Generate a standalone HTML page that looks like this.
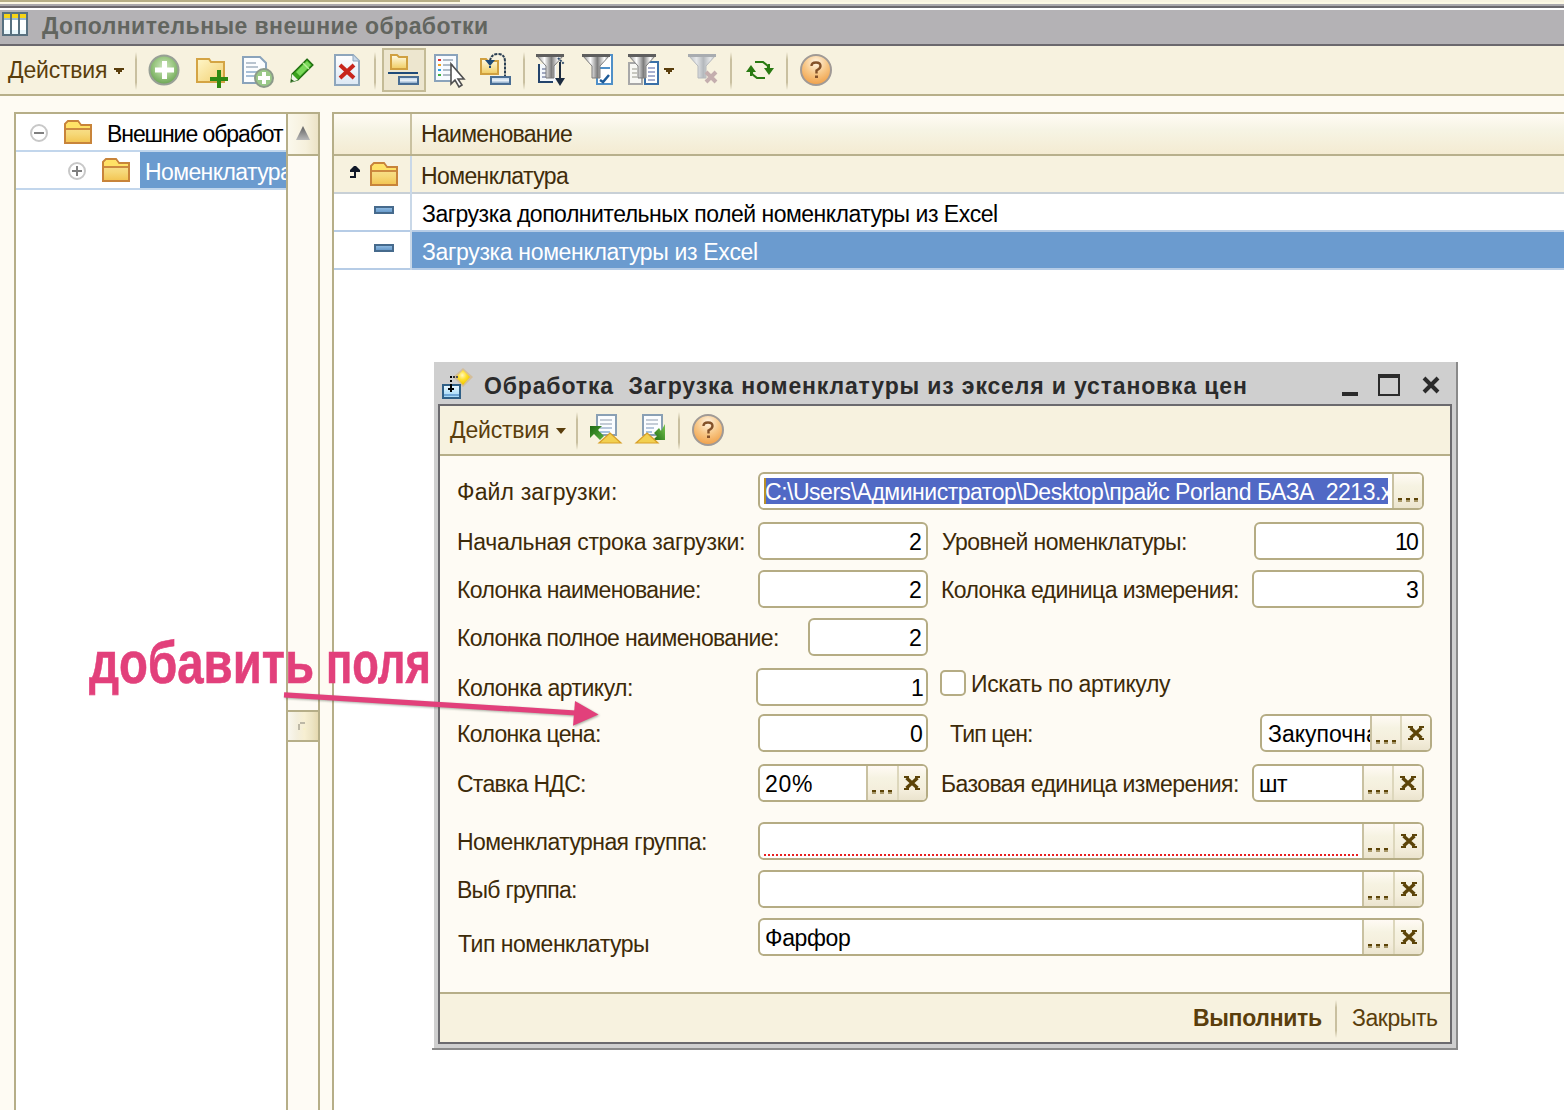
<!DOCTYPE html>
<html><head><meta charset="utf-8"><style>
html,body{margin:0;padding:0}
body{width:1564px;height:1110px;overflow:hidden;position:relative;background:#fefbf3;font-family:"Liberation Sans",sans-serif}
body div, body svg{position:absolute;box-sizing:border-box}
</style></head><body>
<div style="left:0px;top:0px;width:460px;height:2px;background:#b6ae86;"></div>
<div style="left:460px;top:0px;width:1104px;height:2px;background:#f7f2df;"></div>
<div style="left:0px;top:2px;width:1564px;height:2px;background:#fcf8e4;"></div>
<div style="left:0px;top:4px;width:1564px;height:2px;background:#a9a7ab;"></div>
<div style="left:0px;top:6px;width:1564px;height:2px;background:#6b686d;"></div>
<div style="left:0px;top:8px;width:1564px;height:2px;background:#ffffff;"></div>
<div style="left:0px;top:10px;width:1564px;height:34px;background:#b4b2b5;"></div>
<div style="left:0px;top:44px;width:1564px;height:2px;background:#6b686d;"></div>
<div style="left:0px;top:46px;width:1564px;height:48px;background:#f7f2df;"></div>
<div style="left:0px;top:94px;width:1564px;height:2px;background:#b7af89;"></div>
<svg style="left:2px;top:12px" width="26" height="24" viewBox="0 0 26 24">
<rect x="0" y="0" width="26" height="24" fill="#58707f"/>
<rect x="2" y="2" width="6" height="4" fill="#f6d417"/><rect x="10" y="2" width="6" height="4" fill="#f6d417"/><rect x="18" y="2" width="6" height="4" fill="#f6d417"/>
<rect x="2" y="6" width="6" height="2" fill="#9ab8d0"/><rect x="10" y="6" width="6" height="2" fill="#9ab8d0"/><rect x="18" y="6" width="6" height="2" fill="#9ab8d0"/>
<rect x="2" y="8" width="6" height="14" fill="#ffffff"/><rect x="10" y="8" width="6" height="14" fill="#ffffff"/><rect x="18" y="8" width="6" height="14" fill="#ffffff"/>
<rect x="2" y="18" width="6" height="4" fill="#e8f6fb"/><rect x="10" y="18" width="6" height="4" fill="#e8f6fb"/><rect x="18" y="18" width="6" height="4" fill="#e8f6fb"/>
</svg>
<svg style="left:114px;top:68px" width="10" height="6" viewBox="0 0 10 6"><rect x="0" y="0" width="10" height="2" fill="#5a3e0c"/><rect x="2" y="2" width="6" height="2" fill="#5a3e0c"/><rect x="4" y="4" width="2" height="2" fill="#5a3e0c"/></svg>
<div style="left:135px;top:52px;width:2px;height:38px;background:linear-gradient(#f7f2df,#c9c0a0 20%,#c9c0a0 80%,#f7f2df)"></div>
<div style="left:374px;top:52px;width:2px;height:38px;background:linear-gradient(#f7f2df,#c9c0a0 20%,#c9c0a0 80%,#f7f2df)"></div>
<div style="left:523px;top:52px;width:2px;height:38px;background:linear-gradient(#f7f2df,#c9c0a0 20%,#c9c0a0 80%,#f7f2df)"></div>
<div style="left:730px;top:52px;width:2px;height:38px;background:linear-gradient(#f7f2df,#c9c0a0 20%,#c9c0a0 80%,#f7f2df)"></div>
<div style="left:786px;top:52px;width:2px;height:38px;background:linear-gradient(#f7f2df,#c9c0a0 20%,#c9c0a0 80%,#f7f2df)"></div>
<svg style="left:148px;top:54px" width="32" height="32" viewBox="0 0 32 32">
<defs><radialGradient id="g1" cx="50%" cy="40%" r="60%"><stop offset="0" stop-color="#d2e8c2"/><stop offset=".55" stop-color="#9cc884"/><stop offset="1" stop-color="#6aa452"/></radialGradient></defs>
<circle cx="16" cy="16" r="14.5" fill="url(#g1)" stroke="#98a096" stroke-width="2"/>
<rect x="14" y="7" width="5" height="18" fill="#fff"/><rect x="7" y="13.5" width="19" height="5" fill="#fff"/>
</svg>
<svg style="left:196px;top:58px" width="32" height="30" viewBox="0 0 32 30">
<defs><linearGradient id="g2" x1="0" y1="0" x2="1" y2="1"><stop offset="0" stop-color="#fff6c8"/><stop offset="1" stop-color="#f2d072"/></linearGradient></defs>
<path d="M1 1 H13 L15 4 H28 V24 H1 Z" fill="url(#g2)" stroke="#d4a444" stroke-width="2"/>
<rect x="21" y="12" width="4" height="18" fill="#2e8a12"/><rect x="14" y="19" width="18" height="4" fill="#2e8a12"/>
</svg>
<svg style="left:242px;top:56px" width="32" height="32" viewBox="0 0 32 32">
<path d="M1 1 H18 L24 7 V27 H1 Z" fill="#fbfdff" stroke="#8aa3bb" stroke-width="2"/>
<rect x="4" y="6" width="10" height="2" fill="#b8c4d0"/><rect x="4" y="10" width="12" height="2" fill="#b8c4d0"/><rect x="4" y="15" width="12" height="2" fill="#a8c0d8"/><rect x="4" y="19" width="12" height="2" fill="#a8c0d8"/>
<circle cx="22" cy="22" r="9" fill="#9ac888" stroke="#8c9a8a" stroke-width="2"/>
<rect x="20" y="16" width="4" height="12" fill="#fff"/><rect x="16" y="20" width="12" height="4" fill="#fff"/>
</svg>
<svg style="left:288px;top:56px" width="28" height="28" viewBox="0 0 28 28">
<path d="M19 3 L25 9 L10 24 L3 26 L4 18 Z" fill="#3aa21e" stroke="#1e6a10" stroke-width="1.2"/>
<path d="M19 5 L23 9 L12 20 L8 16 Z" fill="#7ad85a"/>
<path d="M15 7 L21 13" stroke="#b8f098" stroke-width="1.5"/>
<path d="M4 18 L10 24 L3 26 Z" fill="#f0f4e8"/><path d="M3 23 L3 26 L6 25 Z" fill="#1e5a10"/>
</svg>
<svg style="left:334px;top:54px" width="28" height="34" viewBox="0 0 28 34">
<defs><linearGradient id="g5" x1="0" y1="0" x2="0" y2="1"><stop offset="0" stop-color="#ffffff"/><stop offset="1" stop-color="#dce8f4"/></linearGradient></defs>
<path d="M1 1 H19 L25 7 V31 H1 Z" fill="url(#g5)" stroke="#8ea6bc" stroke-width="2"/>
<path d="M19 1 V7 H25" fill="#c8d8e8" stroke="#8ea6bc" stroke-width="1"/>
<path d="M6 11 L20 24 M20 11 L6 24" stroke="#c8261c" stroke-width="4"/>
</svg>
<div style="left:382px;top:48px;width:44px;height:44px;background:#ede6cf;border:2px solid #c4bb96"></div>
<svg style="left:388px;top:54px" width="32" height="32" viewBox="0 0 32 32">
<defs><linearGradient id="g6" x1="0" y1="0" x2="0" y2="1"><stop offset="0" stop-color="#fffce8"/><stop offset="1" stop-color="#f0cc60"/></linearGradient>
<linearGradient id="g6b" x1="0" y1="0" x2="0" y2="1"><stop offset="0" stop-color="#b8d0e8"/><stop offset=".5" stop-color="#e8f0f8"/><stop offset="1" stop-color="#6a90b8"/></linearGradient></defs>
<path d="M3 1 H9 L11 3 H19 V15 H3 Z" fill="url(#g6)" stroke="#d0a040" stroke-width="2"/>
<rect x="0" y="18" width="30" height="2" fill="#1e4a78"/>
<rect x="11" y="23" width="19" height="7" fill="url(#g6b)" stroke="#4a6e94" stroke-width="2"/>
</svg>
<svg style="left:434px;top:54px" width="34" height="34" viewBox="0 0 34 34">
<rect x="1" y="1" width="22" height="26" fill="#f8fbff" stroke="#8aa3bb" stroke-width="2"/>
<rect x="4" y="5" width="3" height="2" fill="#e03030"/><rect x="9" y="5" width="10" height="2" fill="#b0bcc8"/>
<rect x="4" y="10" width="3" height="2" fill="#f0a020"/><rect x="9" y="10" width="10" height="2" fill="#b0bcc8"/>
<rect x="4" y="15" width="3" height="2" fill="#30a0e0"/><rect x="9" y="15" width="8" height="2" fill="#b0bcc8"/>
<rect x="4" y="20" width="3" height="2" fill="#40b040"/><rect x="9" y="20" width="8" height="2" fill="#b0bcc8"/>
<path d="M17 10 L17 30 L21 26 L25 33 L28 31 L24 25 L30 25 Z" fill="#fff" stroke="#505050" stroke-width="1.6"/>
</svg>
<svg style="left:478px;top:52px" width="34" height="36" viewBox="0 0 34 36">
<defs><linearGradient id="g8" x1="0" y1="0" x2="0" y2="1"><stop offset="0" stop-color="#fffce8"/><stop offset="1" stop-color="#f0cc60"/></linearGradient>
<linearGradient id="g8b" x1="0" y1="0" x2="0" y2="1"><stop offset="0" stop-color="#b8d0e8"/><stop offset=".5" stop-color="#e8f0f8"/><stop offset="1" stop-color="#6a90b8"/></linearGradient></defs>
<path d="M3 7 H8 L10 9 H20 V22 H3 Z" fill="url(#g8)" stroke="#d0a040" stroke-width="2"/>
<path d="M12 9 Q13 2 20 2 Q27 2 27 10 V26" fill="none" stroke="#2a3e52" stroke-width="2" stroke-dasharray="3 1"/>
<polygon points="7,8 17,8 12,14" fill="#1e4a78"/><rect x="11" y="14" width="2" height="2" fill="#1e4a78"/>
<rect x="13" y="25" width="19" height="7" fill="url(#g8b)" stroke="#4a6e94" stroke-width="2"/>
</svg>
<svg style="left:536px;top:54px" width="34" height="34" viewBox="0 0 34 34">
<defs><linearGradient id="gf536" x1="0" y1="0" x2="1" y2="0"><stop offset="0" stop-color="#7c7c7c"/><stop offset=".3" stop-color="#ffffff"/><stop offset=".55" stop-color="#7c7c7c"/><stop offset=".8" stop-color="#ffffff"/><stop offset="1" stop-color="#7c7c7c"/></linearGradient></defs>
<rect x="3" y="10" width="17" height="18" fill="#f4f8fc"/><path d="M3 10 V28 H17" stroke="#24446c" stroke-width="2" fill="none"/><rect x="6" y="14" width="4" height="2" fill="#a0a8c0"/><rect x="6" y="18" width="4" height="2" fill="#a0a8c0"/><rect x="6" y="22" width="4" height="2" fill="#a0a8c0"/>
<path d="M0 1 H28 L18 12 V24 H10 V12 Z" fill="url(#gf536)" stroke="#7c7c7c" stroke-width="1"/>
<rect x="0" y="0" width="28" height="3" fill="#5e5e5e"/>
<path d="M24 8 V28" stroke="#1c2c40" stroke-width="2"/><polygon points="19,24 29,24 24,32" fill="#1c2c40"/><path d="M22 4 L28 10" stroke="#2c4a6a" stroke-width="2" stroke-dasharray="2 1"/></svg>
<svg style="left:582px;top:54px" width="34" height="34" viewBox="0 0 34 34">
<defs><linearGradient id="gf582" x1="0" y1="0" x2="1" y2="0"><stop offset="0" stop-color="#7c7c7c"/><stop offset=".3" stop-color="#ffffff"/><stop offset=".55" stop-color="#7c7c7c"/><stop offset=".8" stop-color="#ffffff"/><stop offset="1" stop-color="#7c7c7c"/></linearGradient></defs>
<rect x="15" y="1" width="15" height="29" fill="#fff" stroke="#5090c8" stroke-width="2"/><rect x="17" y="13" width="11" height="2" fill="#5090c8"/>
<path d="M0 1 H28 L18 12 V24 H10 V12 Z" fill="url(#gf582)" stroke="#7c7c7c" stroke-width="1"/>
<rect x="0" y="0" width="28" height="3" fill="#5e5e5e"/>
<path d="M18 26 L21 28 L27 21" stroke="#1c5a98" stroke-width="2.5" fill="none"/></svg>
<svg style="left:628px;top:54px" width="34" height="34" viewBox="0 0 34 34">
<defs><linearGradient id="gf628" x1="0" y1="0" x2="1" y2="0"><stop offset="0" stop-color="#7c7c7c"/><stop offset=".3" stop-color="#ffffff"/><stop offset=".55" stop-color="#7c7c7c"/><stop offset=".8" stop-color="#ffffff"/><stop offset="1" stop-color="#7c7c7c"/></linearGradient></defs>
<rect x="1" y="9" width="13" height="21" fill="#f8f8f4" stroke="#a8a8a8" stroke-width="2"/><rect x="4" y="14" width="5" height="2" fill="#c8c8c0"/><rect x="4" y="18" width="5" height="2" fill="#c8c8c0"/><rect x="4" y="22" width="5" height="2" fill="#c8c8c0"/><rect x="17" y="8" width="13" height="22" fill="#fff" stroke="#3a70a8" stroke-width="2"/><rect x="20" y="13" width="7" height="2" fill="#a8b0d0"/><rect x="20" y="17" width="7" height="2" fill="#a8b0d0"/><rect x="20" y="21" width="7" height="2" fill="#a8b0d0"/><rect x="20" y="25" width="7" height="2" fill="#a8b0d0"/>
<path d="M0 1 H28 L18 12 V24 H10 V12 Z" fill="url(#gf628)" stroke="#7c7c7c" stroke-width="1"/>
<rect x="0" y="0" width="28" height="3" fill="#5e5e5e"/>
</svg>
<svg style="left:664px;top:68px" width="10" height="6" viewBox="0 0 10 6"><rect x="0" y="0" width="10" height="2" fill="#5a3e0c"/><rect x="2" y="2" width="6" height="2" fill="#5a3e0c"/><rect x="4" y="4" width="2" height="2" fill="#5a3e0c"/></svg>
<svg style="left:688px;top:54px" width="34" height="34" viewBox="0 0 34 34">
<defs><linearGradient id="gf688" x1="0" y1="0" x2="1" y2="0"><stop offset="0" stop-color="#b4b8bc"/><stop offset=".3" stop-color="#e6e8ea"/><stop offset=".55" stop-color="#b4b8bc"/><stop offset=".8" stop-color="#e6e8ea"/><stop offset="1" stop-color="#b4b8bc"/></linearGradient></defs>

<path d="M0 1 H28 L18 12 V24 H10 V12 Z" fill="url(#gf688)" stroke="#b4b8bc" stroke-width="1"/>
<rect x="0" y="0" width="28" height="3" fill="#a8acb0"/>
<path d="M18 18 L28 28 M28 18 L18 28" stroke="#c4aeae" stroke-width="4"/></svg>
<svg style="left:746px;top:58px" width="28" height="24" viewBox="0 0 28 24">
<path d="M9 4 H17 L22 8 V10" fill="none" stroke="#2a7a12" stroke-width="2.2"/>
<path d="M19 20 H11 L6 16 V14" fill="none" stroke="#2a7a12" stroke-width="2.2"/>
<polygon points="0,14 10,14 5,7" fill="#2a7a12"/><rect x="4" y="10" width="2" height="8" fill="#2a7a12"/>
<polygon points="18,10 28,10 23,17" fill="#2a7a12"/><rect x="22" y="6" width="2" height="8" fill="#2a7a12"/>
</svg>
<svg style="left:800px;top:54px" width="32" height="32" viewBox="0 0 32 32">
<defs><radialGradient id="gh800" cx="50%" cy="25%" r="75%"><stop offset="0" stop-color="#fff4e4"/><stop offset=".5" stop-color="#f8c888"/><stop offset="1" stop-color="#f0a048"/></radialGradient></defs>
<circle cx="16" cy="16" r="15" fill="url(#gh800)" stroke="#a09a96" stroke-width="2"/>
<path d="M11.5 12 Q11.5 8.5 16 8.5 Q20.5 8.5 20.5 12 Q20.5 14.5 16.5 16.5 V19.5" fill="none" stroke="#84522a" stroke-width="2.4"/>
<rect x="15" y="21.5" width="3" height="2.5" fill="#84522a"/>
</svg>
<div style="left:14px;top:112px;width:306px;height:1000px;background:#ffffff;border:2px solid #b6ae88"></div>
<div style="left:286px;top:114px;width:2px;height:996px;background:#b6ae88;"></div>
<div style="left:288px;top:114px;width:30px;height:996px;background:#fefbf5;"></div>
<div style="left:288px;top:114px;width:30px;height:40px;background:linear-gradient(90deg,#fbf8ec,#f6f0dc 60%,#ece3c6);"></div>
<div style="left:288px;top:154px;width:30px;height:2px;background:#b6ae88;"></div>
<svg style="left:296px;top:126px" width="14" height="14"><defs><linearGradient id="gt" x1="0" y1="0" x2="0" y2="1"><stop offset="0" stop-color="#606060"/><stop offset="1" stop-color="#b8b8b8"/></linearGradient></defs><polygon points="7,0 14,14 0,14" fill="url(#gt)"/></svg>
<div style="left:288px;top:710px;width:30px;height:2px;background:#b6ae88;"></div>
<div style="left:288px;top:712px;width:30px;height:28px;background:linear-gradient(90deg,#f9f7ef,#f3eedc 30%,#f7efd2 55%,#ede4c4 80%,#e6d9b0);"></div>
<div style="left:288px;top:740px;width:30px;height:2px;background:#b6ae88;"></div>
<svg style="left:298px;top:722px" width="10" height="10" viewBox="0 0 10 10"><path d="M2 1 H7 M1 2 V8" stroke="#bdb8a6" stroke-width="2"/><rect x="5" y="6" width="3" height="2" fill="#f6f0c8"/></svg>
<div style="left:16px;top:150px;width:270px;height:2px;background:#c2d6ec;"></div>
<div style="left:16px;top:188px;width:270px;height:2px;background:#c2d6ec;"></div>
<div style="left:140px;top:152px;width:146px;height:36px;background:#6b9bcf;"></div>
<svg style="left:30px;top:124px" width="18" height="18" viewBox="0 0 18 18"><circle cx="9" cy="9" r="8" fill="#fff" stroke="#c8c8c8" stroke-width="2"/><rect x="4" y="8" width="10" height="2" fill="#808080"/></svg>
<svg style="left:68px;top:162px" width="18" height="18" viewBox="0 0 18 18"><circle cx="9" cy="9" r="8" fill="#fff" stroke="#c8c8c8" stroke-width="2"/><rect x="4" y="8" width="10" height="2" fill="#808080"/><rect x="8" y="4" width="2" height="10" fill="#808080"/></svg>
<svg style="left:64px;top:120px" width="28" height="24" viewBox="0 0 28 24">
<defs><linearGradient id="gfo64120" x1="0" y1="0" x2="0" y2="1"><stop offset="0" stop-color="#fbe8a0"/><stop offset=".6" stop-color="#f6d878"/><stop offset="1" stop-color="#f2c450"/></linearGradient></defs>
<path d="M1 23 V4 L4 1 H14 L17 5 H27 V23 Z" fill="url(#gfo64120)" stroke="#c8843a" stroke-width="2"/>
<path d="M2 8 V4.5 L4.5 2 H13.5 L16.5 6 H26 V8 Z" fill="#ffe266"/>
<rect x="2" y="8" width="24" height="2" fill="#cc8a40"/>
</svg>
<svg style="left:102px;top:158px" width="28" height="24" viewBox="0 0 28 24">
<defs><linearGradient id="gfo102158" x1="0" y1="0" x2="0" y2="1"><stop offset="0" stop-color="#fbe8a0"/><stop offset=".6" stop-color="#f6d878"/><stop offset="1" stop-color="#f2c450"/></linearGradient></defs>
<path d="M1 23 V4 L4 1 H14 L17 5 H27 V23 Z" fill="url(#gfo102158)" stroke="#c8843a" stroke-width="2"/>
<path d="M2 8 V4.5 L4.5 2 H13.5 L16.5 6 H26 V8 Z" fill="#ffe266"/>
<rect x="2" y="8" width="24" height="2" fill="#cc8a40"/>
</svg>
<div style="left:332px;top:112px;width:1232px;height:2px;background:#b6ae88;"></div>
<div style="left:332px;top:112px;width:2px;height:998px;background:#b6ae88;"></div>
<div style="left:334px;top:114px;width:1230px;height:996px;background:#ffffff;"></div>
<div style="left:334px;top:114px;width:1230px;height:40px;background:linear-gradient(#fffcf4,#f6f4e4 40%,#f4ebd2);"></div>
<div style="left:410px;top:114px;width:2px;height:40px;background:#c9c1a0;"></div>
<div style="left:334px;top:154px;width:1230px;height:2px;background:#b8b08c;"></div>
<div style="left:334px;top:156px;width:1230px;height:36px;background:#f7f2df;"></div>
<div style="left:334px;top:192px;width:1230px;height:2px;background:#c8d0d6;"></div>
<div style="left:334px;top:230px;width:1230px;height:2px;background:#b6cce6;"></div>
<div style="left:412px;top:232px;width:1152px;height:36px;background:#6b9bcf;"></div>
<div style="left:334px;top:268px;width:1230px;height:2px;background:#b6cce6;"></div>
<div style="left:410px;top:156px;width:2px;height:114px;background:#c9d8e8;"></div>
<svg style="left:350px;top:166px" width="10" height="12" viewBox="0 0 10 12"><polygon points="4,0 0,4 10,4 6,0" fill="#101828"/><rect x="4" y="2" width="2" height="8" fill="#101828"/><rect x="0" y="10" width="6" height="2" fill="#101828"/><rect x="0" y="4" width="10" height="2" fill="#101828"/></svg>
<svg style="left:370px;top:162px" width="28" height="24" viewBox="0 0 28 24">
<defs><linearGradient id="gfo370162" x1="0" y1="0" x2="0" y2="1"><stop offset="0" stop-color="#fbe8a0"/><stop offset=".6" stop-color="#f6d878"/><stop offset="1" stop-color="#f2c450"/></linearGradient></defs>
<path d="M1 23 V4 L4 1 H14 L17 5 H27 V23 Z" fill="url(#gfo370162)" stroke="#c8843a" stroke-width="2"/>
<path d="M2 8 V4.5 L4.5 2 H13.5 L16.5 6 H26 V8 Z" fill="#ffe266"/>
<rect x="2" y="8" width="24" height="2" fill="#cc8a40"/>
</svg>
<div style="left:374px;top:206px;width:20px;height:8px;background:linear-gradient(#8cb8e0,#6a9ccc);border:2px solid #466a8c"></div>
<div style="left:374px;top:244px;width:20px;height:8px;background:linear-gradient(#8cb8e0,#6a9ccc);border:2px solid #466a8c"></div>
<div style="left:434px;top:362px;width:1022px;height:686px;background:#cfcfcf;"></div>
<div style="left:1456px;top:362px;width:2px;height:688px;background:#8a8a8a;"></div>
<div style="left:432px;top:1048px;width:1026px;height:2px;background:#8a8a8a;"></div>
<div style="left:438px;top:404px;width:1014px;height:640px;background:#fefbf4;border:2px solid #6b6a6e"></div>
<div style="left:440px;top:406px;width:1010px;height:48px;background:#f7f2df;"></div>
<div style="left:440px;top:454px;width:1010px;height:2px;background:#b6ae88;"></div>
<div style="left:440px;top:992px;width:1010px;height:2px;background:#b6ae88;"></div>
<div style="left:440px;top:994px;width:1010px;height:48px;background:#f7f2df;"></div>
<svg style="left:438px;top:364px" width="40" height="40" viewBox="0 0 40 40">
<defs><linearGradient id="gti" x1="0" y1="0" x2="0" y2="1"><stop offset="0" stop-color="#f0faff"/><stop offset=".5" stop-color="#c0e6fb"/><stop offset="1" stop-color="#9ed6f6"/></linearGradient>
<radialGradient id="gst" cx="45%" cy="35%" r="60%"><stop offset="0" stop-color="#fff8c0"/><stop offset=".5" stop-color="#ffe030"/><stop offset="1" stop-color="#f0c800"/></radialGradient></defs>
<polygon points="25,4 35,13 25,23 15,13" fill="#d8b070" opacity=".55"/>
<polygon points="25,6 32,13 25,21 18,13" fill="url(#gst)"/>
<rect x="5" y="21" width="17" height="13" fill="url(#gti)" stroke="#2f5f86" stroke-width="2"/>
<rect x="6" y="30" width="15" height="2" fill="#70a8d8"/>
<rect x="12" y="12" width="2" height="2" fill="#000"/><rect x="12" y="16" width="2" height="2" fill="#000"/><rect x="12" y="20" width="2" height="2" fill="#000"/><rect x="15" y="12" width="2" height="2" fill="#333"/><rect x="18" y="12" width="2" height="2" fill="#555"/>
<rect x="12" y="22" width="2" height="6" fill="#000"/><rect x="10" y="24" width="6" height="2" fill="#000"/>
</svg>
<div style="left:1342px;top:392px;width:16px;height:4px;background:#2b2b2b;"></div>
<div style="left:1378px;top:374px;width:22px;height:22px;border:2px solid #2b2b2b;border-top-width:4px"></div>
<svg style="left:1422px;top:376px" width="18" height="18" viewBox="0 0 18 18"><path d="M2 2 L16 16 M16 2 L2 16" stroke="#2b2b2b" stroke-width="4"/></svg>
<svg style="left:556px;top:428px" width="10" height="6"><polygon points="0,0 10,0 5,6" fill="#5a3e0c"/></svg>
<div style="left:576px;top:412px;width:2px;height:38px;background:linear-gradient(#f7f2df,#c9c0a0 20%,#c9c0a0 80%,#f7f2df)"></div>
<div style="left:678px;top:412px;width:2px;height:38px;background:linear-gradient(#f7f2df,#c9c0a0 20%,#c9c0a0 80%,#f7f2df)"></div>
<svg style="left:588px;top:412px" width="36" height="34" viewBox="0 0 36 34">
<defs><linearGradient id="gar1" x1="0" y1="0" x2="1" y2="1"><stop offset="0" stop-color="#1e6a12"/><stop offset="1" stop-color="#58b040"/></linearGradient></defs>
<rect x="9" y="3" width="19" height="20" fill="#fbfdff" stroke="#8aa0b4" stroke-width="2"/>
<rect x="12" y="7" width="12" height="2" fill="#c4ccd6"/><rect x="12" y="11" width="12" height="2" fill="#c4ccd6"/><rect x="12" y="15" width="12" height="2" fill="#b8c8dc"/><rect x="12" y="19" width="10" height="2" fill="#a8c4e0"/>
<polygon points="2,14 14,14 10,18 16,24 12,28 6,22 2,26" fill="url(#gar1)"/>
<polygon points="22,21 33,31 11,31" fill="#f2d050" stroke="#d8a028" stroke-width="1.2"/>
</svg>
<svg style="left:634px;top:412px" width="36" height="34" viewBox="0 0 36 34">
<defs><linearGradient id="gar2" x1="1" y1="0" x2="0" y2="1"><stop offset="0" stop-color="#78c850"/><stop offset="1" stop-color="#1e6a12"/></linearGradient></defs>
<rect x="9" y="3" width="19" height="20" fill="#fbfdff" stroke="#8aa0b4" stroke-width="2"/>
<rect x="12" y="7" width="12" height="2" fill="#c4ccd6"/><rect x="12" y="11" width="12" height="2" fill="#c4ccd6"/><rect x="12" y="15" width="8" height="2" fill="#b8c8dc"/><rect x="12" y="19" width="6" height="2" fill="#a8c4e0"/>
<polygon points="31,12 31,28 19,28 23,24 20,21 25,16 27,19" fill="url(#gar2)"/>
<polygon points="13,21 24,31 2,31" fill="#f2d050" stroke="#d8a028" stroke-width="1.2"/>
</svg>
<svg style="left:692px;top:414px" width="32" height="32" viewBox="0 0 32 32">
<defs><radialGradient id="gh692" cx="50%" cy="25%" r="75%"><stop offset="0" stop-color="#fff4e4"/><stop offset=".5" stop-color="#f8c888"/><stop offset="1" stop-color="#f0a048"/></radialGradient></defs>
<circle cx="16" cy="16" r="15" fill="url(#gh692)" stroke="#a09a96" stroke-width="2"/>
<path d="M11.5 12 Q11.5 8.5 16 8.5 Q20.5 8.5 20.5 12 Q20.5 14.5 16.5 16.5 V19.5" fill="none" stroke="#84522a" stroke-width="2.4"/>
<rect x="15" y="21.5" width="3" height="2.5" fill="#84522a"/>
</svg>
<div style="left:758px;top:472px;width:666px;height:38px;background:#fff;border:2px solid #b5ac84;border-radius:6px;overflow:hidden"><div style="left:632px;top:0;width:30px;height:34px;background:linear-gradient(#fffaf4,#f6f3e2 35%,#f4eedc 70%,#ebe4ce);border-left:2px solid #c9c1a1"></div></div>
<div style="left:764px;top:478px;width:624px;height:26px;background:#5169c5;"></div>
<div style="left:764px;top:478px;width:2px;height:26px;background:#b8902a;"></div>
<div style="left:1398px;top:498px;width:4px;height:2px;background:#5c4408;"></div>
<div style="left:1398px;top:500px;width:4px;height:2px;background:#a8986a;"></div>
<div style="left:1406px;top:498px;width:4px;height:2px;background:#5c4408;"></div>
<div style="left:1406px;top:500px;width:4px;height:2px;background:#a8986a;"></div>
<div style="left:1414px;top:498px;width:4px;height:2px;background:#5c4408;"></div>
<div style="left:1414px;top:500px;width:4px;height:2px;background:#a8986a;"></div>
<div style="left:758px;top:522px;width:170px;height:38px;background:#fff;border:2px solid #b5ac84;border-radius:6px;overflow:hidden"></div>
<div style="left:1254px;top:522px;width:170px;height:38px;background:#fff;border:2px solid #b5ac84;border-radius:6px;overflow:hidden"></div>
<div style="left:758px;top:570px;width:170px;height:38px;background:#fff;border:2px solid #b5ac84;border-radius:6px;overflow:hidden"></div>
<div style="left:1252px;top:570px;width:172px;height:38px;background:#fff;border:2px solid #b5ac84;border-radius:6px;overflow:hidden"></div>
<div style="left:808px;top:618px;width:120px;height:38px;background:#fff;border:2px solid #b5ac84;border-radius:6px;overflow:hidden"></div>
<div style="left:756px;top:668px;width:172px;height:38px;background:#fff;border:2px solid #b5ac84;border-radius:6px;overflow:hidden"></div>
<div style="left:940px;top:670px;width:26px;height:26px;background:#fff;border:2px solid #b5ac84;border-radius:5px"></div>
<div style="left:758px;top:714px;width:170px;height:38px;background:#fff;border:2px solid #b5ac84;border-radius:6px;overflow:hidden"></div>
<div style="left:1260px;top:714px;width:172px;height:38px;background:#fff;border:2px solid #b5ac84;border-radius:6px;overflow:hidden"><div style="left:108px;top:0;width:30px;height:34px;background:linear-gradient(#fffaf4,#f6f3e2 35%,#f4eedc 70%,#ebe4ce);border-left:2px solid #c9c1a1"></div><div style="left:138px;top:0;width:30px;height:34px;background:linear-gradient(#fffaf4,#f6f3e2 35%,#f4eedc 70%,#ebe4ce);border-left:2px solid #ddd7bc"></div></div>
<div style="left:1376px;top:740px;width:4px;height:2px;background:#5c4408;"></div>
<div style="left:1376px;top:742px;width:4px;height:2px;background:#a8986a;"></div>
<div style="left:1384px;top:740px;width:4px;height:2px;background:#5c4408;"></div>
<div style="left:1384px;top:742px;width:4px;height:2px;background:#a8986a;"></div>
<div style="left:1392px;top:740px;width:4px;height:2px;background:#5c4408;"></div>
<div style="left:1392px;top:742px;width:4px;height:2px;background:#a8986a;"></div>
<svg style="left:1408px;top:726px" width="16" height="14" viewBox="0 0 16 14"><path d="M2.5 2 L13.5 12 M13.5 2 L2.5 12" stroke="#5c4408" stroke-width="3.4"/><rect x="0" y="0" width="5" height="2" fill="#5c4408"/><rect x="11" y="0" width="5" height="2" fill="#5c4408"/><rect x="0" y="12" width="5" height="2" fill="#5c4408"/><rect x="11" y="12" width="5" height="2" fill="#5c4408"/></svg>
<div style="left:758px;top:764px;width:170px;height:38px;background:#fff;border:2px solid #b5ac84;border-radius:6px;overflow:hidden"><div style="left:106px;top:0;width:31px;height:34px;background:linear-gradient(#fffaf4,#f6f3e2 35%,#f4eedc 70%,#ebe4ce);border-left:2px solid #c9c1a1"></div><div style="left:137px;top:0;width:29px;height:34px;background:linear-gradient(#fffaf4,#f6f3e2 35%,#f4eedc 70%,#ebe4ce);border-left:2px solid #ddd7bc"></div></div>
<div style="left:872px;top:790px;width:4px;height:2px;background:#5c4408;"></div>
<div style="left:872px;top:792px;width:4px;height:2px;background:#a8986a;"></div>
<div style="left:880px;top:790px;width:4px;height:2px;background:#5c4408;"></div>
<div style="left:880px;top:792px;width:4px;height:2px;background:#a8986a;"></div>
<div style="left:888px;top:790px;width:4px;height:2px;background:#5c4408;"></div>
<div style="left:888px;top:792px;width:4px;height:2px;background:#a8986a;"></div>
<svg style="left:904px;top:776px" width="16" height="14" viewBox="0 0 16 14"><path d="M2.5 2 L13.5 12 M13.5 2 L2.5 12" stroke="#5c4408" stroke-width="3.4"/><rect x="0" y="0" width="5" height="2" fill="#5c4408"/><rect x="11" y="0" width="5" height="2" fill="#5c4408"/><rect x="0" y="12" width="5" height="2" fill="#5c4408"/><rect x="11" y="12" width="5" height="2" fill="#5c4408"/></svg>
<div style="left:1252px;top:764px;width:172px;height:38px;background:#fff;border:2px solid #b5ac84;border-radius:6px;overflow:hidden"><div style="left:108px;top:0;width:30px;height:34px;background:linear-gradient(#fffaf4,#f6f3e2 35%,#f4eedc 70%,#ebe4ce);border-left:2px solid #c9c1a1"></div><div style="left:138px;top:0;width:30px;height:34px;background:linear-gradient(#fffaf4,#f6f3e2 35%,#f4eedc 70%,#ebe4ce);border-left:2px solid #ddd7bc"></div></div>
<div style="left:1368px;top:790px;width:4px;height:2px;background:#5c4408;"></div>
<div style="left:1368px;top:792px;width:4px;height:2px;background:#a8986a;"></div>
<div style="left:1376px;top:790px;width:4px;height:2px;background:#5c4408;"></div>
<div style="left:1376px;top:792px;width:4px;height:2px;background:#a8986a;"></div>
<div style="left:1384px;top:790px;width:4px;height:2px;background:#5c4408;"></div>
<div style="left:1384px;top:792px;width:4px;height:2px;background:#a8986a;"></div>
<svg style="left:1400px;top:776px" width="16" height="14" viewBox="0 0 16 14"><path d="M2.5 2 L13.5 12 M13.5 2 L2.5 12" stroke="#5c4408" stroke-width="3.4"/><rect x="0" y="0" width="5" height="2" fill="#5c4408"/><rect x="11" y="0" width="5" height="2" fill="#5c4408"/><rect x="0" y="12" width="5" height="2" fill="#5c4408"/><rect x="11" y="12" width="5" height="2" fill="#5c4408"/></svg>
<div style="left:758px;top:822px;width:666px;height:38px;background:#fff;border:2px solid #b5ac84;border-radius:6px;overflow:hidden"><div style="left:602px;top:0;width:31px;height:34px;background:linear-gradient(#fffaf4,#f6f3e2 35%,#f4eedc 70%,#ebe4ce);border-left:2px solid #c9c1a1"></div><div style="left:633px;top:0;width:29px;height:34px;background:linear-gradient(#fffaf4,#f6f3e2 35%,#f4eedc 70%,#ebe4ce);border-left:2px solid #ddd7bc"></div></div>
<div style="left:1368px;top:848px;width:4px;height:2px;background:#5c4408;"></div>
<div style="left:1368px;top:850px;width:4px;height:2px;background:#a8986a;"></div>
<div style="left:1376px;top:848px;width:4px;height:2px;background:#5c4408;"></div>
<div style="left:1376px;top:850px;width:4px;height:2px;background:#a8986a;"></div>
<div style="left:1384px;top:848px;width:4px;height:2px;background:#5c4408;"></div>
<div style="left:1384px;top:850px;width:4px;height:2px;background:#a8986a;"></div>
<svg style="left:1401px;top:834px" width="16" height="14" viewBox="0 0 16 14"><path d="M2.5 2 L13.5 12 M13.5 2 L2.5 12" stroke="#5c4408" stroke-width="3.4"/><rect x="0" y="0" width="5" height="2" fill="#5c4408"/><rect x="11" y="0" width="5" height="2" fill="#5c4408"/><rect x="0" y="12" width="5" height="2" fill="#5c4408"/><rect x="11" y="12" width="5" height="2" fill="#5c4408"/></svg>
<div style="left:758px;top:870px;width:666px;height:38px;background:#fff;border:2px solid #b5ac84;border-radius:6px;overflow:hidden"><div style="left:602px;top:0;width:31px;height:34px;background:linear-gradient(#fffaf4,#f6f3e2 35%,#f4eedc 70%,#ebe4ce);border-left:2px solid #c9c1a1"></div><div style="left:633px;top:0;width:29px;height:34px;background:linear-gradient(#fffaf4,#f6f3e2 35%,#f4eedc 70%,#ebe4ce);border-left:2px solid #ddd7bc"></div></div>
<div style="left:1368px;top:896px;width:4px;height:2px;background:#5c4408;"></div>
<div style="left:1368px;top:898px;width:4px;height:2px;background:#a8986a;"></div>
<div style="left:1376px;top:896px;width:4px;height:2px;background:#5c4408;"></div>
<div style="left:1376px;top:898px;width:4px;height:2px;background:#a8986a;"></div>
<div style="left:1384px;top:896px;width:4px;height:2px;background:#5c4408;"></div>
<div style="left:1384px;top:898px;width:4px;height:2px;background:#a8986a;"></div>
<svg style="left:1401px;top:882px" width="16" height="14" viewBox="0 0 16 14"><path d="M2.5 2 L13.5 12 M13.5 2 L2.5 12" stroke="#5c4408" stroke-width="3.4"/><rect x="0" y="0" width="5" height="2" fill="#5c4408"/><rect x="11" y="0" width="5" height="2" fill="#5c4408"/><rect x="0" y="12" width="5" height="2" fill="#5c4408"/><rect x="11" y="12" width="5" height="2" fill="#5c4408"/></svg>
<div style="left:758px;top:918px;width:666px;height:38px;background:#fff;border:2px solid #b5ac84;border-radius:6px;overflow:hidden"><div style="left:602px;top:0;width:31px;height:34px;background:linear-gradient(#fffaf4,#f6f3e2 35%,#f4eedc 70%,#ebe4ce);border-left:2px solid #c9c1a1"></div><div style="left:633px;top:0;width:29px;height:34px;background:linear-gradient(#fffaf4,#f6f3e2 35%,#f4eedc 70%,#ebe4ce);border-left:2px solid #ddd7bc"></div></div>
<div style="left:1368px;top:944px;width:4px;height:2px;background:#5c4408;"></div>
<div style="left:1368px;top:946px;width:4px;height:2px;background:#a8986a;"></div>
<div style="left:1376px;top:944px;width:4px;height:2px;background:#5c4408;"></div>
<div style="left:1376px;top:946px;width:4px;height:2px;background:#a8986a;"></div>
<div style="left:1384px;top:944px;width:4px;height:2px;background:#5c4408;"></div>
<div style="left:1384px;top:946px;width:4px;height:2px;background:#a8986a;"></div>
<svg style="left:1401px;top:930px" width="16" height="14" viewBox="0 0 16 14"><path d="M2.5 2 L13.5 12 M13.5 2 L2.5 12" stroke="#5c4408" stroke-width="3.4"/><rect x="0" y="0" width="5" height="2" fill="#5c4408"/><rect x="11" y="0" width="5" height="2" fill="#5c4408"/><rect x="0" y="12" width="5" height="2" fill="#5c4408"/><rect x="11" y="12" width="5" height="2" fill="#5c4408"/></svg>
<div style="left:764px;top:854px;width:594px;height:2px;background:repeating-linear-gradient(90deg,#e82020 0 2px,transparent 2px 4px)"></div>
<div style="left:1335px;top:1000px;width:2px;height:38px;background:linear-gradient(#f7f2df,#c9c0a0 20%,#c9c0a0 80%,#f7f2df)"></div>
<div style="left:42.00px;top:15px;font-size:23px;line-height:23px;font-weight:700;color:#62655f;letter-spacing:0.419px;white-space:pre;font-family:'Liberation Sans';">Дополнительные внешние обработки</div>
<div style="left:8.00px;top:59px;font-size:23px;line-height:23px;font-weight:400;color:#5a3e0c;letter-spacing:-0.188px;white-space:pre;font-family:'Liberation Sans';">Действия</div>
<div style="left:100px;top:117px;width:186px;height:35px;overflow:hidden"><div style="left:107.00px;top:123px;font-size:23px;line-height:23px;font-weight:400;color:#000000;letter-spacing:-1.073px;white-space:pre;font-family:'Liberation Sans';;left:7.00px;top:6px">Внешние обработ</div></div>
<div style="left:140px;top:155px;width:146px;height:35px;overflow:hidden"><div style="left:145.00px;top:161px;font-size:23px;line-height:23px;font-weight:400;color:#ffffff;letter-spacing:-0.596px;white-space:pre;font-family:'Liberation Sans';;left:5.00px;top:6px">Номенклатура</div></div>
<div style="left:421.00px;top:123px;font-size:23px;line-height:23px;font-weight:400;color:#3f2c0a;letter-spacing:-0.695px;white-space:pre;font-family:'Liberation Sans';">Наименование</div>
<div style="left:421.00px;top:165px;font-size:23px;line-height:23px;font-weight:400;color:#3f2c0a;letter-spacing:-0.596px;white-space:pre;font-family:'Liberation Sans';">Номенклатура</div>
<div style="left:422.00px;top:203px;font-size:23px;line-height:23px;font-weight:400;color:#000000;letter-spacing:-0.497px;white-space:pre;font-family:'Liberation Sans';">Загрузка дополнительных полей номенклатуры из Excel</div>
<div style="left:422.00px;top:241px;font-size:23px;line-height:23px;font-weight:400;color:#ffffff;letter-spacing:-0.341px;white-space:pre;font-family:'Liberation Sans';">Загрузка номенклатуры из Excel</div>
<div style="left:484.00px;top:375px;font-size:23px;line-height:23px;font-weight:700;color:#2b2b2b;letter-spacing:0.856px;white-space:pre;font-family:'Liberation Sans';">Обработка  Загрузка номенклатуры из экселя и установка цен</div>
<div style="left:450.00px;top:419px;font-size:23px;line-height:23px;font-weight:400;color:#5a3e0c;letter-spacing:-0.188px;white-space:pre;font-family:'Liberation Sans';">Действия</div>
<div style="left:766px;top:475px;width:622px;height:35px;overflow:hidden"><div style="left:765.00px;top:481px;font-size:23px;line-height:23px;font-weight:400;color:#ffffff;letter-spacing:-0.477px;white-space:pre;font-family:'Liberation Sans';;left:-1.00px;top:6px">C:\Users\Администратор\Desktop\прайс Porland БАЗА  2213.xls</div></div>
<div style="left:457.00px;top:481px;font-size:23px;line-height:23px;font-weight:400;color:#3d2a08;letter-spacing:0.142px;white-space:pre;font-family:'Liberation Sans';">Файл загрузки:</div>
<div style="left:909.00px;top:531px;font-size:23px;line-height:23px;font-weight:400;color:#000;letter-spacing:0.000px;white-space:pre;font-family:'Liberation Sans';">2</div>
<div style="left:457.00px;top:531px;font-size:23px;line-height:23px;font-weight:400;color:#3d2a08;letter-spacing:-0.320px;white-space:pre;font-family:'Liberation Sans';">Начальная строка загрузки:</div>
<div style="left:942.00px;top:531px;font-size:23px;line-height:23px;font-weight:400;color:#3d2a08;letter-spacing:-0.565px;white-space:pre;font-family:'Liberation Sans';">Уровней номенклатуры:</div>
<div style="left:1395.00px;top:531px;font-size:23px;line-height:23px;font-weight:400;color:#000;letter-spacing:-1.792px;white-space:pre;font-family:'Liberation Sans';">10</div>
<div style="left:909.00px;top:579px;font-size:23px;line-height:23px;font-weight:400;color:#000;letter-spacing:0.000px;white-space:pre;font-family:'Liberation Sans';">2</div>
<div style="left:457.00px;top:579px;font-size:23px;line-height:23px;font-weight:400;color:#3d2a08;letter-spacing:-0.607px;white-space:pre;font-family:'Liberation Sans';">Колонка наименование:</div>
<div style="left:941.00px;top:579px;font-size:23px;line-height:23px;font-weight:400;color:#3d2a08;letter-spacing:-0.586px;white-space:pre;font-family:'Liberation Sans';">Колонка единица измерения:</div>
<div style="left:1406.00px;top:579px;font-size:23px;line-height:23px;font-weight:400;color:#000;letter-spacing:0.000px;white-space:pre;font-family:'Liberation Sans';">3</div>
<div style="left:909.00px;top:627px;font-size:23px;line-height:23px;font-weight:400;color:#000;letter-spacing:0.000px;white-space:pre;font-family:'Liberation Sans';">2</div>
<div style="left:457.00px;top:627px;font-size:23px;line-height:23px;font-weight:400;color:#3d2a08;letter-spacing:-0.629px;white-space:pre;font-family:'Liberation Sans';">Колонка полное наименование:</div>
<div style="left:911.00px;top:677px;font-size:23px;line-height:23px;font-weight:400;color:#000;letter-spacing:0.000px;white-space:pre;font-family:'Liberation Sans';">1</div>
<div style="left:457.00px;top:677px;font-size:23px;line-height:23px;font-weight:400;color:#3d2a08;letter-spacing:-0.520px;white-space:pre;font-family:'Liberation Sans';">Колонка артикул:</div>
<div style="left:971.00px;top:673px;font-size:23px;line-height:23px;font-weight:400;color:#3d2a08;letter-spacing:-0.390px;white-space:pre;font-family:'Liberation Sans';">Искать по артикулу</div>
<div style="left:910.00px;top:723px;font-size:23px;line-height:23px;font-weight:400;color:#000;letter-spacing:0.000px;white-space:pre;font-family:'Liberation Sans';">0</div>
<div style="left:457.00px;top:723px;font-size:23px;line-height:23px;font-weight:400;color:#3d2a08;letter-spacing:-0.650px;white-space:pre;font-family:'Liberation Sans';">Колонка цена:</div>
<div style="left:950.00px;top:723px;font-size:23px;line-height:23px;font-weight:400;color:#3d2a08;letter-spacing:-0.877px;white-space:pre;font-family:'Liberation Sans';">Тип цен:</div>
<div style="left:1266px;top:717px;width:104px;height:35px;overflow:hidden"><div style="left:1268.00px;top:723px;font-size:23px;line-height:23px;font-weight:400;color:#000;letter-spacing:0.000px;white-space:pre;font-family:'Liberation Sans';;left:2.00px;top:6px">Закупочная</div></div>
<div style="left:765.00px;top:773px;font-size:23px;line-height:23px;font-weight:400;color:#000;letter-spacing:0.708px;white-space:pre;font-family:'Liberation Sans';">20%</div>
<div style="left:457.00px;top:773px;font-size:23px;line-height:23px;font-weight:400;color:#3d2a08;letter-spacing:-0.744px;white-space:pre;font-family:'Liberation Sans';">Ставка НДС:</div>
<div style="left:941.00px;top:773px;font-size:23px;line-height:23px;font-weight:400;color:#3d2a08;letter-spacing:-0.574px;white-space:pre;font-family:'Liberation Sans';">Базовая единица измерения:</div>
<div style="left:1259.00px;top:773px;font-size:23px;line-height:23px;font-weight:400;color:#000;letter-spacing:-0.452px;white-space:pre;font-family:'Liberation Sans';">шт</div>
<div style="left:457.00px;top:831px;font-size:23px;line-height:23px;font-weight:400;color:#3d2a08;letter-spacing:-0.572px;white-space:pre;font-family:'Liberation Sans';">Номенклатурная группа:</div>
<div style="left:457.00px;top:879px;font-size:23px;line-height:23px;font-weight:400;color:#3d2a08;letter-spacing:-0.756px;white-space:pre;font-family:'Liberation Sans';">Выб группа:</div>
<div style="left:458.00px;top:933px;font-size:23px;line-height:23px;font-weight:400;color:#3d2a08;letter-spacing:-0.492px;white-space:pre;font-family:'Liberation Sans';">Тип номенклатуры</div>
<div style="left:765.00px;top:927px;font-size:23px;line-height:23px;font-weight:400;color:#000;letter-spacing:-0.357px;white-space:pre;font-family:'Liberation Sans';">Фарфор</div>
<div style="left:1193.00px;top:1007px;font-size:23px;line-height:23px;font-weight:700;color:#5a3e0c;letter-spacing:-0.316px;white-space:pre;font-family:'Liberation Sans';">Выполнить</div>
<div style="left:1352.00px;top:1007px;font-size:23px;line-height:23px;font-weight:400;color:#5a3e0c;letter-spacing:-0.434px;white-space:pre;font-family:'Liberation Sans';">Закрыть</div>
<div style="position:absolute;left:89px;top:633px;font:700 60px/60px 'Liberation Sans';color:#e2407b;-webkit-text-stroke:0.6px #e2407b;transform:scaleX(0.789);transform-origin:0 0;white-space:pre">добавить</div>
<div style="position:absolute;left:325.7px;top:633px;font:700 60px/60px 'Liberation Sans';color:#e2407b;-webkit-text-stroke:0.6px #e2407b;transform:scaleX(0.725);transform-origin:0 0;white-space:pre">поля</div>
<svg style="position:absolute;left:0;top:0;filter:drop-shadow(1px 1.5px 1px rgba(60,80,60,.45))" width="1564" height="1110" viewBox="0 0 1564 1110">
<path d="M284 694.8 L576 713" stroke="#e2407b" stroke-width="5.2" stroke-linecap="butt"/>
<polygon points="575,701 598.5,714.6 573,725.7" fill="#e2407b"/>
</svg>
</body></html>
